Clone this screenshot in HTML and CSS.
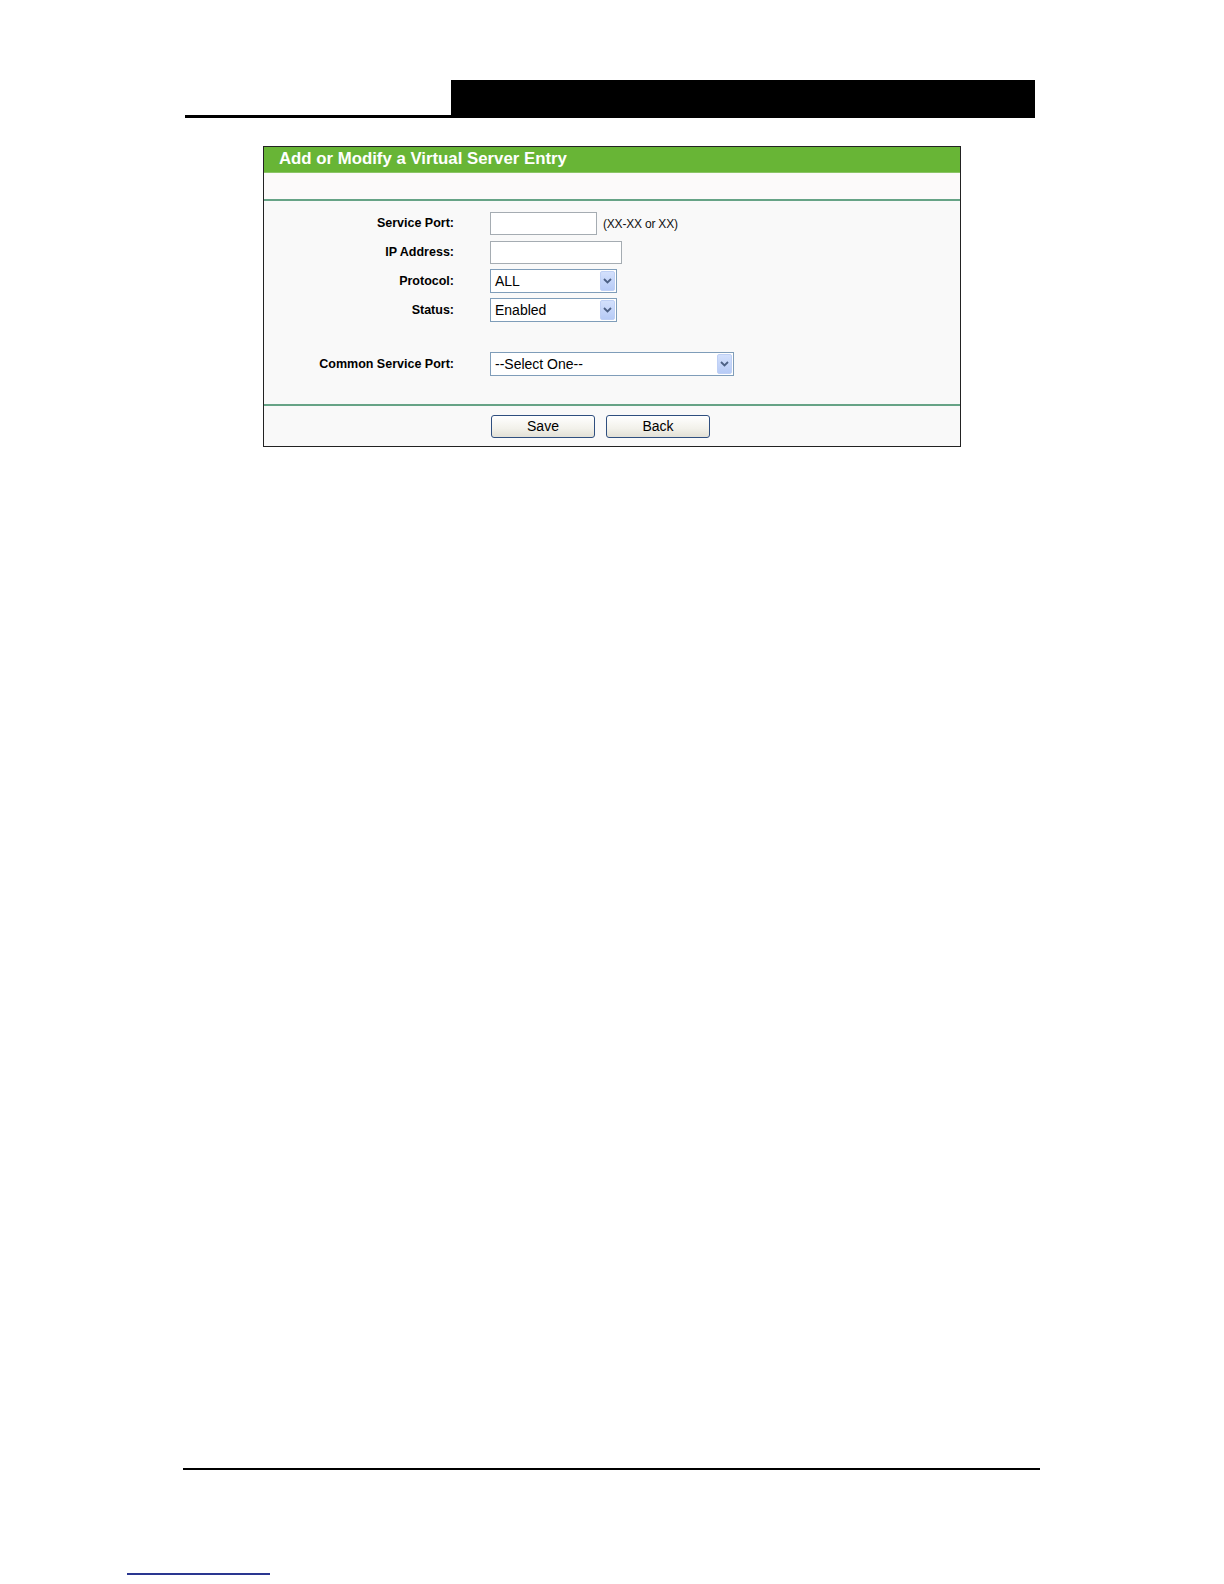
FILE: index.html
```html
<!DOCTYPE html>
<html>
<head>
<meta charset="utf-8">
<title>Add or Modify a Virtual Server Entry</title>
<link rel="stylesheet" href="styles.css">
</head>
<body>
<div class="sheet">
  <div class="doc">
    <div class="running-head">
      <div class="rh-left"></div>
      <div class="rh-bar"></div>
    </div>
    <div class="panel">
      <div class="panel-title">Add or Modify a Virtual Server Entry</div>
      <div class="panel-blank"></div>
      <div class="panel-body">
        <div class="form-grid">
          <label class="lbl">Service Port:</label>
          <div class="field"><div class="textbox tb-port"></div><span class="hint">(XX-XX or XX)</span></div>

          <label class="lbl">IP Address:</label>
          <div class="field"><div class="textbox tb-ip"></div></div>

          <label class="lbl">Protocol:</label>
          <div class="field">
            <div class="select sel-small"><span class="sel-text">ALL</span><span class="sel-arrow"><svg width="9" height="6" viewBox="0 0 9 6"><path d="M1 1 L4.5 4.5 L8 1" fill="none" stroke="#4d6185" stroke-width="1.8"/></svg></span></div>
          </div>

          <label class="lbl">Status:</label>
          <div class="field">
            <div class="select sel-small"><span class="sel-text">Enabled</span><span class="sel-arrow"><svg width="9" height="6" viewBox="0 0 9 6"><path d="M1 1 L4.5 4.5 L8 1" fill="none" stroke="#4d6185" stroke-width="1.8"/></svg></span></div>
          </div>

          <label class="lbl lbl-common">Common Service Port:</label>
          <div class="field field-common">
            <div class="select sel-wide"><span class="sel-text">--Select One--</span><span class="sel-arrow"><svg width="9" height="6" viewBox="0 0 9 6"><path d="M1 1 L4.5 4.5 L8 1" fill="none" stroke="#4d6185" stroke-width="1.8"/></svg></span></div>
          </div>
        </div>
      </div>
      <div class="panel-actions">
        <button class="btn">Save</button>
        <button class="btn">Back</button>
      </div>
    </div>
  </div>
  <div class="foot-rule"></div>
  <div class="foot-link"></div>
</div>
</body>
</html>
```

FILE: styles.css
```css
html, body {
  margin: 0;
  padding: 0;
  background: #ffffff;
}

body {
  font-family: "Liberation Sans", Arial, sans-serif;
  color: #000;
}

.sheet {
  width: 1224px;
  height: 1584px;
  overflow: hidden;
}

.doc {
  height: 1468px;
  padding-top: 80px;
  box-sizing: border-box;
}

.running-head {
  display: flex;
  margin-left: 185px;
  width: 850px;
  height: 38px;
}

.rh-left {
  width: 266px;
  height: 38px;
  box-sizing: border-box;
  border-bottom: 3px solid #000;
}

.rh-bar {
  flex: 1;
  background: #000;
}

.panel {
  margin-top: 28px;
  margin-left: 263px;
  width: 698px;
  box-sizing: border-box;
  border: 1px solid #222;
  background: #f9f9f9;
}

.panel-title {
  height: 25px;
  line-height: 24px;
  background: #68b536;
  color: #fff;
  font-size: 16.8px;
  font-weight: bold;
  padding-left: 15px;
  border-bottom: 1px solid #8cc466;
}

.panel-blank {
  height: 26px;
  background: #fcfafa;
  border-bottom: 2px solid #66a386;
}

.panel-body {
  padding: 10px 0 28px 0;
  border-bottom: 2px solid #66a386;
}

.form-grid {
  display: grid;
  grid-template-columns: 190px 1fr;
  grid-template-rows: 24px 24px 24px 24px 49px;
  column-gap: 36px;
  row-gap: 5px;
}

.lbl {
  display: flex;
  align-items: center;
  justify-content: flex-end;
  font-size: 12.5px;
  font-weight: bold;
  white-space: nowrap;
}

.field {
  display: flex;
  align-items: center;
}

.lbl-common {
  align-items: flex-end;
  padding-bottom: 5px;
}

.field-common {
  align-items: flex-end;
}

.textbox {
  height: 23px;
  box-sizing: border-box;
  border: 1px solid #a5acb2;
  background: #fff;
}

.tb-port { width: 107px; }
.tb-ip { width: 132px; }

.hint {
  margin-left: 6px;
  margin-top: 2px;
  font-size: 12px;
  letter-spacing: -0.2px;
  color: #111;
}

.select {
  display: flex;
  align-items: center;
  height: 24px;
  box-sizing: border-box;
  border: 1px solid #7f9db9;
  background: #fff;
  padding: 1px;
}

.sel-small { width: 127px; }
.sel-wide { width: 244px; }

.sel-text {
  flex: 1;
  font-size: 14px;
  padding-left: 3px;
  line-height: 20px;
  white-space: nowrap;
}

.sel-arrow {
  width: 15px;
  height: 20px;
  box-sizing: border-box;
  border: 1px solid #bfd0f5;
  border-radius: 2px;
  background: linear-gradient(#d3e0fc, #b7cbf6);
  display: flex;
  align-items: center;
  justify-content: center;
}

.panel-actions {
  display: flex;
  gap: 11px;
  padding: 9px 0 8px 227px;
}

.btn {
  width: 104px;
  height: 23px;
  box-sizing: border-box;
  border: 1px solid #2f4f7f;
  border-radius: 3px;
  background: linear-gradient(#ffffff, #f2f1ea 60%, #e2e0d6);
  font-family: "Liberation Sans", Arial, sans-serif;
  font-size: 14px;
  color: #000;
  padding: 0;
  line-height: 21px;
}

.foot-rule {
  margin-left: 183px;
  width: 857px;
  height: 2px;
  background: #000;
}

.foot-link {
  margin-top: 103px;
  margin-left: 127px;
  width: 143px;
  height: 2px;
  background: #2a3690;
}
```
